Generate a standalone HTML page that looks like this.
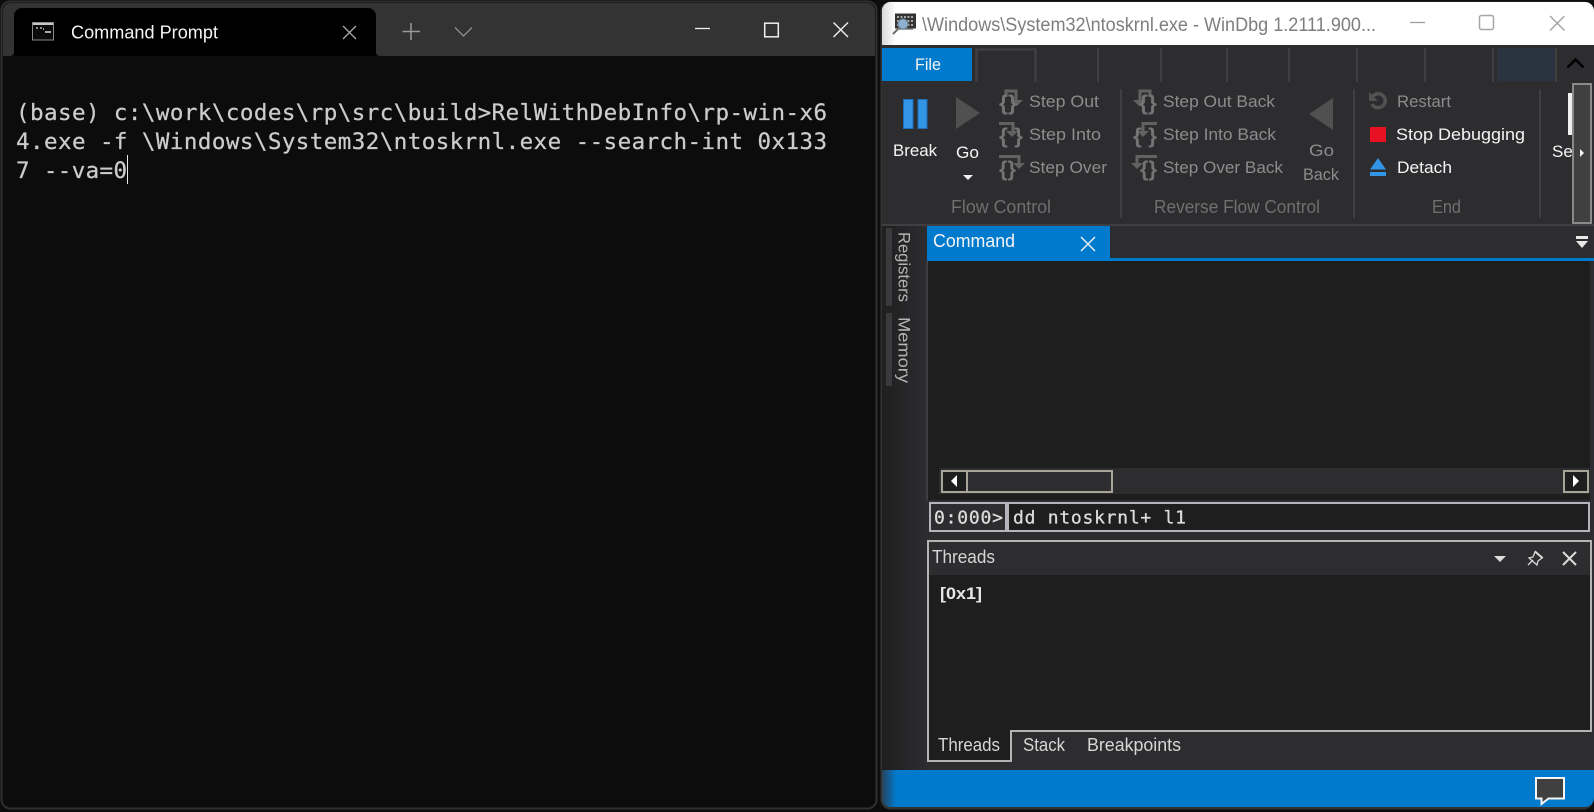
<!DOCTYPE html>
<html><head><meta charset="utf-8"><title>Command Prompt and WinDbg</title>
<style>
html,body{margin:0;padding:0;background:#0d0d0d;width:1594px;height:812px;overflow:hidden}
svg{display:block;position:absolute;left:0;top:0}
text{font-family:"Liberation Sans",sans-serif;font-size:17px;white-space:pre}
.m{font-family:"DejaVu Sans Mono","Liberation Mono",monospace;font-size:22.5px;fill:#cccccc;stroke:#cccccc;stroke-width:.25px}
.c{font-family:"DejaVu Sans Mono","Liberation Mono",monospace;font-size:18px;fill:#dcdcdc;stroke:#dcdcdc;stroke-width:.3px}
.g{fill:#8c8c8c}.w{fill:#f4f4f4}.f{fill:#6f6f6f}.l{fill:#d6d6d6}
.ic{fill:none;stroke:#626262;stroke-width:3}
.b{fill:#747474;font-size:21px;font-weight:bold}
</style></head><body>
<svg width="1594" height="812" viewBox="0 0 1594 812" xmlns="http://www.w3.org/2000/svg">
<defs>
<linearGradient id="sh" x1="0" x2="1" y1="0" y2="0"><stop offset="0" stop-color="#1f1f20"/><stop offset="1" stop-color="#2d2d30"/></linearGradient>
<linearGradient id="sb" x1="0" x2="1" y1="0" y2="0"><stop offset="0" stop-color="#27435a"/><stop offset="1" stop-color="#007acc"/></linearGradient>
<linearGradient id="tw" x1="0" x2="1" y1="0" y2="0"><stop offset="0" stop-color="#d8d8d8"/><stop offset="1" stop-color="#ffffff"/></linearGradient>
<clipPath id="wc"><rect x="882" y="2" width="712" height="805" rx="9"/></clipPath>
</defs>
<rect width="1594" height="812" fill="#0d0d0d"/>

<!-- Terminal window -->
<rect x="1.500" y="1.500" width="875" height="807" rx="9" fill="#0c0c0c" stroke="#2f2f2f" stroke-width="2"/>
<path d="M3 56V11a8 8 0 0 1 8-8H867a8 8 0 0 1 8 8V56z" fill="#333333"/>
<path d="M3 56h8a4 4 0 0 0 3-4V16a8 8 0 0 1 8-8H368a8 8 0 0 1 8 8V52a4 4 0 0 0 3 4z" fill="#000"/>
<rect x="32.500" y="22.500" width="21" height="17.500" fill="#0c0c0c" stroke="#8a8a8a"/>
<rect x="33" y="23" width="20" height="2" fill="#c8c8c8"/>
<path d="M36 28h2m2 0h2m1 1h1" stroke="#bbb" stroke-width="1.500"/><path d="M45 32h6" stroke="#ddd" stroke-width="1.500"/>
<text x="71" y="38.500" class="w" textLength="147" lengthAdjust="spacingAndGlyphs" style="font-size:18px">Command Prompt</text>
<path d="M343 26l13 13M356 26l-13 13" stroke="#a8a8a8" stroke-width="1.300" fill="none"/>
<path d="M411 23v17M402.500 31.500h17.500" stroke="#9a9a9a" stroke-width="1.500" fill="none"/>
<path d="M455 27.500l8.500 8.500 8.500-8.500" stroke="#8e8e8e" stroke-width="1.300" fill="none"/>
<path d="M695 28.500h15" stroke="#f0f0f0" stroke-width="1.300"/>
<rect x="764.700" y="23.200" width="13.600" height="13.600" fill="none" stroke="#f0f0f0" stroke-width="1.500"/>
<path d="M833.500 22.500l14.500 14.500M848 22.500l-14.500 14.500" stroke="#f0f0f0" stroke-width="1.400" fill="none"/>
<text class="m" x="16" y="120" textLength="811" lengthAdjust="spacing">(base) c:\work\codes\rp\src\build&gt;RelWithDebInfo\rp-win-x6</text>
<text class="m" x="16" y="149" textLength="811" lengthAdjust="spacing">4.exe -f \Windows\System32\ntoskrnl.exe --search-int 0x133</text>
<text class="m" x="16" y="178" textLength="111" lengthAdjust="spacing">7 --va=0</text>
<rect x="127" y="155" width="1" height="29" fill="#e8e8e8"/>

<!-- WinDbg window -->
<rect x="880.500" y="1.500" width="713" height="808" rx="10" fill="#333"/>
<g clip-path="url(#wc)">
<rect x="882" y="2" width="712" height="805" fill="#2d2d30"/>
<rect x="882" y="2" width="712" height="43" fill="#fff"/>
<rect x="882" y="2" width="14" height="43" fill="url(#tw)"/>
<rect x="882" y="226" width="45" height="545" fill="url(#sh)"/>
<rect x="882" y="770" width="712" height="37" fill="#007acc"/>
<rect x="882" y="770" width="14" height="37" fill="url(#sb)"/>
</g>
<!-- title bar -->
<rect x="895" y="13.500" width="21" height="15" fill="#333"/>
<path d="M897 17h17M897 21h17M897 25h17" stroke="#cfcfcf" stroke-width="1.500" stroke-dasharray="2 1.500"/>
<path d="M899 29h14" stroke="#777" stroke-width="1.500"/>
<circle cx="903" cy="24" r="5" fill="#8fb1cf" stroke="#6d8192"/>
<path d="M899 28l-6 6" stroke="#6f6f6f" stroke-width="2"/>
<text x="922" y="31" fill="#7e7e7e" textLength="454" lengthAdjust="spacingAndGlyphs" style="font-size:19px">\Windows\System32\ntoskrnl.exe - WinDbg 1.2111.900...</text>
<path d="M1410 22.500h15" stroke="#a0a0a0" stroke-width="1.300"/>
<rect x="1479.500" y="15.500" width="14" height="14" rx="2" fill="none" stroke="#a6a6a6" stroke-width="1.500"/>
<path d="M1550 16l14.500 14.500M1564.500 16l-14.500 14.500" stroke="#a0a0a0" stroke-width="1.300" fill="none"/>

<!-- Ribbon tabs -->
<rect x="882" y="48" width="90" height="33" fill="#007acc"/>
<text x="915" y="70" class="w" textLength="26" lengthAdjust="spacingAndGlyphs">File</text>
<path d="M976.500 82V49.500H1035.500V82" fill="none" stroke="#3f3f42" stroke-width="2.500"/>
<path d="M1098 48v34M1161 48v34M1227 48v34M1289 48v34M1357 48v34M1425 48v34M1493 48v34M1556 48v34" stroke="#3f3f42" stroke-width="2"/>
<rect x="1497" y="48" width="58" height="33" fill="#2a3440"/>
<path d="M1567.500 67.500l8-8 8 8" fill="none" stroke="#000" stroke-width="2.500"/>

<!-- Flow control -->
<rect x="903.500" y="99.500" width="9.500" height="29" fill="#3295e6" stroke="#1c6fb8"/>
<rect x="918" y="99.500" width="9" height="29" fill="#3295e6" stroke="#1c6fb8"/>
<text x="893" y="156" class="w" textLength="44" lengthAdjust="spacingAndGlyphs">Break</text>
<path d="M956 97v32l24-16z" fill="#505050"/>
<text x="956" y="158" class="w" textLength="23" lengthAdjust="spacingAndGlyphs">Go</text>
<path d="M963 175h10l-5 5z" fill="#f4f4f4"/>

<path class="ic" d="M1006 97v-6h10v12"/><path d="M1011 100h12l-6 6z" fill="#626262"/>
<text x="999" y="110" class="b" textLength="18" lengthAdjust="spacingAndGlyphs">{}</text>
<path class="ic" d="M999 123.500h14v9"/><path d="M1006 131h12l-6 6z" fill="#626262"/>
<text x="999" y="143" class="b" textLength="24" lengthAdjust="spacingAndGlyphs">{ }</text>
<path class="ic" d="M999 156.500h20v8"/><path d="M1013 163h12l-6 6z" fill="#626262"/>
<text x="999" y="176" class="b" textLength="17" lengthAdjust="spacingAndGlyphs">{}</text>
<text x="1029" y="107" class="g" textLength="70" lengthAdjust="spacingAndGlyphs">Step Out</text>
<text x="1029" y="140" class="g" textLength="72" lengthAdjust="spacingAndGlyphs">Step Into</text>
<text x="1029" y="173" class="g" textLength="78" lengthAdjust="spacingAndGlyphs">Step Over</text>
<text x="951" y="213" class="f" textLength="100" lengthAdjust="spacingAndGlyphs" style="font-size:18px">Flow Control</text>
<rect x="1120" y="89" width="2" height="129" fill="#3f3f42"/>

<!-- Reverse -->
<path class="ic" d="M1150 97v-6h-10v12"/><path d="M1133 100h12l-6 6z" fill="#626262"/>
<text x="1139" y="110" class="b" textLength="18" lengthAdjust="spacingAndGlyphs">{}</text>
<path class="ic" d="M1157 123.500h-14v9"/><path d="M1137 131h12l-6 6z" fill="#626262"/>
<text x="1133" y="143" class="b" textLength="24" lengthAdjust="spacingAndGlyphs">{ }</text>
<path class="ic" d="M1157 156.500h-20v8"/><path d="M1131 163h12l-6 6z" fill="#626262"/>
<text x="1140" y="176" class="b" textLength="17" lengthAdjust="spacingAndGlyphs">{}</text>
<text x="1163" y="107" class="g" textLength="112" lengthAdjust="spacingAndGlyphs">Step Out Back</text>
<text x="1163" y="140" class="g" textLength="113" lengthAdjust="spacingAndGlyphs">Step Into Back</text>
<text x="1163" y="173" class="g" textLength="120" lengthAdjust="spacingAndGlyphs">Step Over Back</text>
<path d="M1333 98v32l-24-16z" fill="#505050"/>
<text x="1309" y="156" class="g" textLength="25" lengthAdjust="spacingAndGlyphs">Go</text>
<text x="1303" y="180" class="g" textLength="36" lengthAdjust="spacingAndGlyphs">Back</text>
<text x="1154" y="213" class="f" textLength="166" lengthAdjust="spacingAndGlyphs" style="font-size:18px">Reverse Flow Control</text>
<rect x="1353" y="89" width="2" height="129" fill="#3f3f42"/>

<!-- End -->
<path d="M1373 96a7 7 0 1 1-1 8" fill="none" stroke="#525252" stroke-width="3.500"/>
<path d="M1369 92v9h9z" fill="#525252"/>
<text x="1397" y="107" class="g" textLength="54" lengthAdjust="spacingAndGlyphs">Restart</text>
<rect x="1370" y="127" width="16" height="15" fill="#e81123"/>
<text x="1396" y="140" class="w" textLength="129" lengthAdjust="spacingAndGlyphs">Stop Debugging</text>
<path d="M1378 158l8 11.500h-16z" fill="#3295e6"/>
<rect x="1370" y="172" width="16" height="4" fill="#3295e6"/>
<text x="1397" y="173" class="w" textLength="55" lengthAdjust="spacingAndGlyphs">Detach</text>
<text x="1432" y="213" class="f" textLength="29" lengthAdjust="spacingAndGlyphs" style="font-size:18px">End</text>
<rect x="1539" y="89" width="2" height="129" fill="#3f3f42"/>
<rect x="1568" y="93" width="5" height="42" fill="#f0f0f0"/>
<text x="1552" y="157" class="w">Se</text>
<rect x="1573" y="84" width="18" height="139" fill="#404040" stroke="#8a8a8a" stroke-width="2"/>
<path d="M1580 149l4 4-4 4z" fill="#f4f4f4"/>
<rect x="882" y="224" width="712" height="2" fill="#3f3f42"/>

<!-- Side tabs -->
<rect x="886" y="228" width="6" height="78" fill="#3a3a3c"/>
<rect x="886" y="313" width="6" height="73" fill="#3a3a3c"/>
<text transform="translate(898.500,232) rotate(90)" fill="#b4b4b4" textLength="70" lengthAdjust="spacingAndGlyphs">Registers</text>
<text transform="translate(898.500,317) rotate(90)" fill="#b4b4b4" textLength="66" lengthAdjust="spacingAndGlyphs">Memory</text>

<!-- Command doc -->
<rect x="927" y="258" width="667" height="272" fill="#1e1e1e"/>
<rect x="926" y="261" width="2" height="240" fill="#3f3f42"/>
<rect x="927" y="226" width="183" height="35" fill="#007acc"/>
<rect x="1110" y="258" width="484" height="3" fill="#007acc"/>
<text x="933" y="247" class="w" textLength="82" lengthAdjust="spacingAndGlyphs" style="font-size:18px">Command</text>
<path d="M1081 237l14 14M1095 237l-14 14" stroke="#f2f2f2" stroke-width="1.400" fill="none"/>
<rect x="1576" y="236" width="12" height="3" fill="#e8e8e8"/>
<path d="M1576 241h12l-6 7z" fill="#e8e8e8"/>

<!-- Scrollbar -->
<rect x="939" y="468" width="651" height="26" fill="#2d2d30"/>
<rect x="942" y="471" width="170" height="21" fill="#2d2d30" stroke="#a8a498" stroke-width="2"/>
<rect x="942" y="471" width="25" height="21" fill="#1e1e1e" stroke="#a8a498" stroke-width="2"/>
<path d="M957 475v12l-6-6z" fill="#fff"/>
<rect x="1564" y="471" width="24" height="21" fill="#1e1e1e" stroke="#a8a498" stroke-width="2"/>
<path d="M1573 475v12l6-6z" fill="#fff"/>
<rect x="1590" y="261" width="4" height="270" fill="#2d2d30"/>

<!-- Input -->
<rect x="927" y="500" width="667" height="34" fill="#2d2d30"/>
<rect x="930" y="503" width="76" height="28" fill="#2d2d30" stroke="#b4b4bc" stroke-width="2"/>
<rect x="1008" y="503" width="581" height="28" fill="#1e1e1e" stroke="#b4b4bc" stroke-width="2"/>
<text x="934" y="523.500" class="c" textLength="69" lengthAdjust="spacing">0:000&gt;</text>
<text x="1013" y="523.500" class="c" textLength="173" lengthAdjust="spacing">dd ntoskrnl+ l1</text>

<!-- Threads panel -->
<rect x="928" y="541" width="663" height="190" fill="#1e1e1e" stroke="#b4b4b4" stroke-width="2"/>
<rect x="929" y="542" width="661" height="33" fill="#2d2d30"/>
<text x="932" y="563" class="l" textLength="63" lengthAdjust="spacingAndGlyphs" style="font-size:18px">Threads</text>
<path d="M1494 556h12l-6 6z" fill="#dcdcdc"/>
<path d="M1528 565l5-5M1535 551l8 7M1535 552l-2 5-4 1 8 7 1-4 4-3z" fill="none" stroke="#d8d8d8" stroke-width="1.300"/>
<path d="M1563 552l13 13M1576 552l-13 13" stroke="#dcdcdc" stroke-width="2" fill="none"/>
<text x="940" y="599" fill="#e6e6e6" textLength="42" lengthAdjust="spacingAndGlyphs" style="font-weight:bold;font-size:17px">[0x1]</text>

<!-- Panel tabs -->
<rect x="927" y="733" width="667" height="37" fill="#2d2d30"/>
<rect x="928" y="725" width="83" height="36" fill="#1e1e1e"/>
<path d="M928 725V761H1011V731H1592" fill="none" stroke="#b4b4b4" stroke-width="2"/>
<rect x="929" y="725" width="81" height="8" fill="#1e1e1e"/>
<text x="938" y="751" class="l" textLength="62" lengthAdjust="spacingAndGlyphs" style="font-size:18px">Threads</text>
<text x="1023" y="751" class="l" textLength="42" lengthAdjust="spacingAndGlyphs" style="font-size:18px">Stack</text>
<text x="1087" y="751" class="l" textLength="94" lengthAdjust="spacingAndGlyphs" style="font-size:18px">Breakpoints</text>

<!-- Feedback bubble -->
<path d="M1536 778H1564V798.500H1548.500L1541.500 804V798.500H1536z" fill="#404040" stroke="#f4f4f4" stroke-width="2"/>
</svg>
</body></html>
